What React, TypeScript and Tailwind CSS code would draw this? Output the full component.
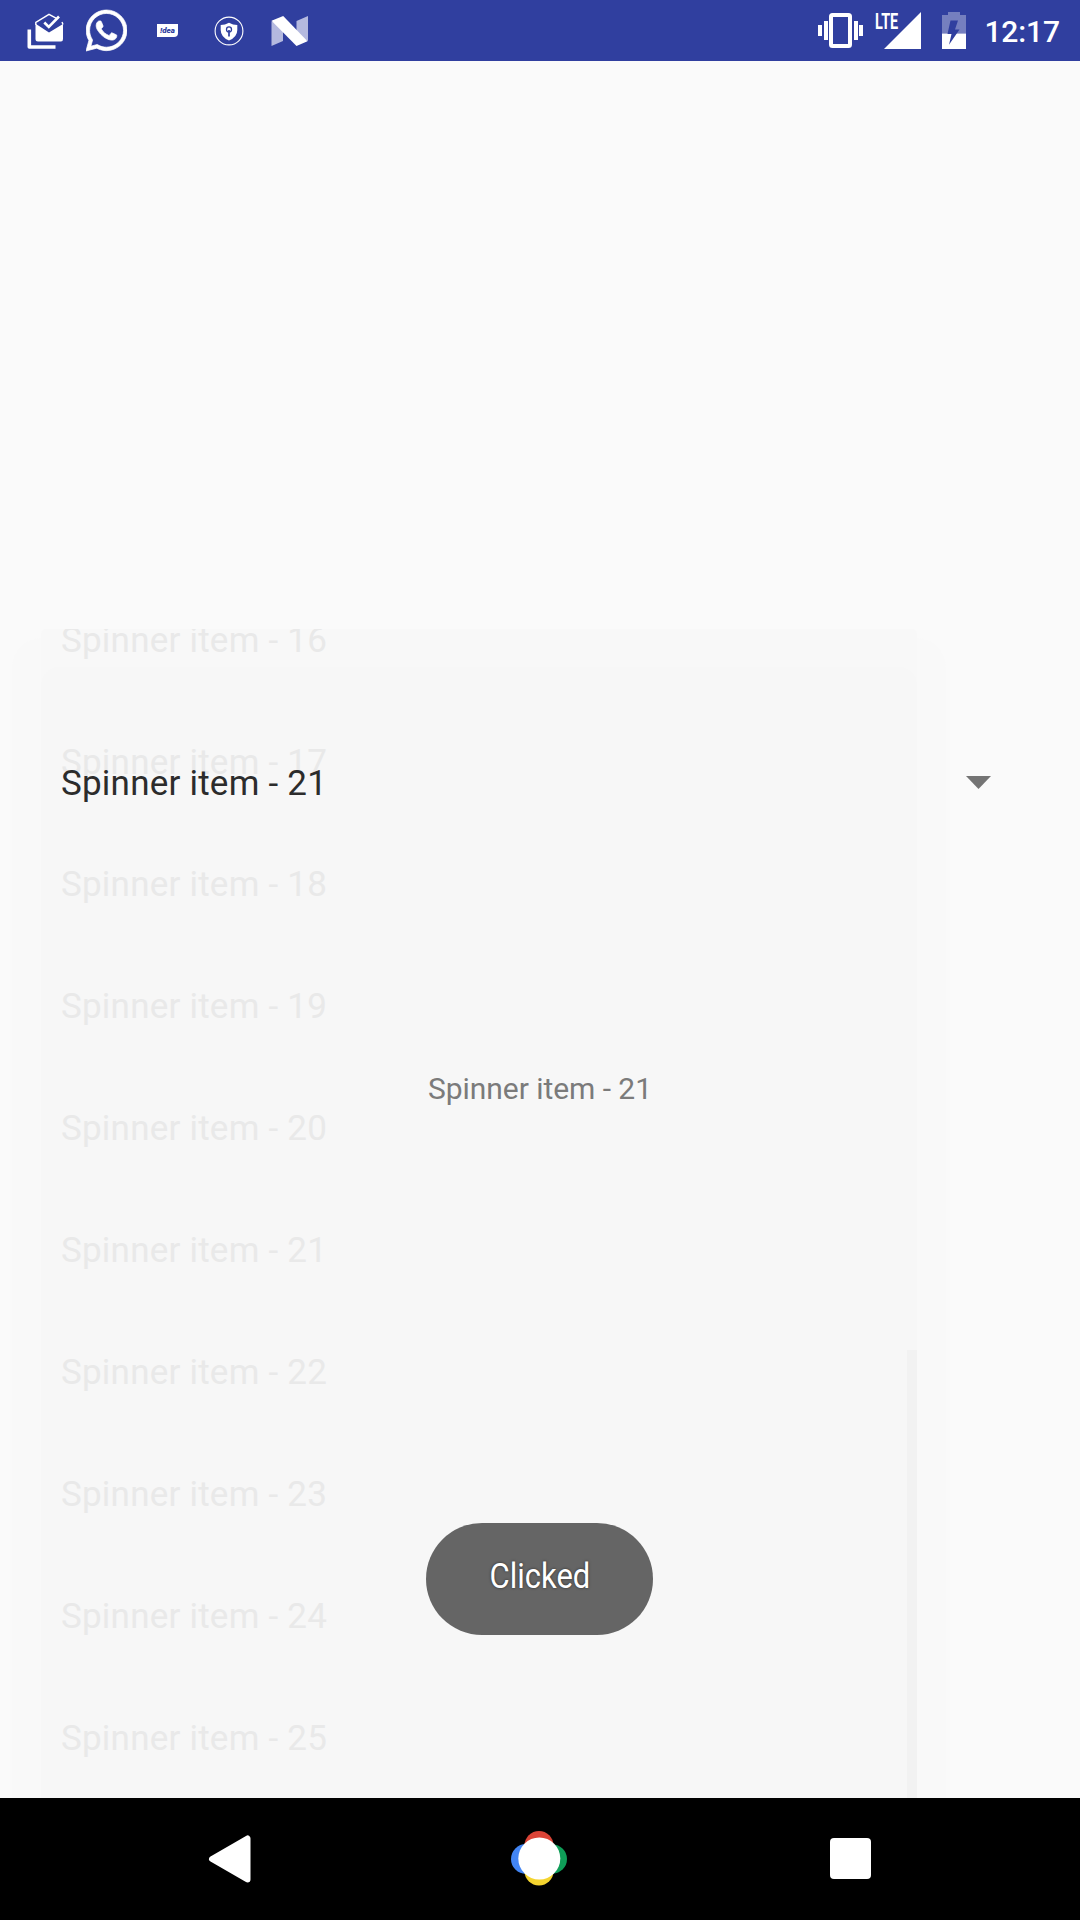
import { FaWhatsapp } from "react-icons/fa";

const items = [16, 17, 18, 19, 20, 21, 22, 23, 24, 25];

function InboxIcon() {
  return (
    <svg className="mt-[3px] h-[38px] w-[38px]" viewBox="0 0 38 38">
      <path d="M2.3 16.5V34H28.5" fill="none" stroke="#fff" strokeWidth="3.6" strokeLinejoin="round" />
      <path d="M9 11 22 19.5 36 11V26Q36 28.5 34 28.5H11Q8.5 28.5 8.5 26V12Z" fill="#fff" />
      <path d="M8.8 12V9.5L22 1.3 29 5.2M35 9 36 11.5" fill="none" stroke="#fff" strokeWidth="1.4" />
      <path d="M17.3 9.5 21.8 14 32 3.5" fill="none" stroke="#fff" strokeWidth="2.6" />
    </svg>
  );
}

function ShieldIcon() {
  return (
    <svg className="h-[30px] w-[30px]" viewBox="0 0 30 30">
      <circle cx="15" cy="15" r="13.9" fill="none" stroke="#fff" strokeWidth="1.1" />
      <path d="M15 6.8Q19 9 23.3 9V14Q23.3 21 15 24.5 6.7 21 6.7 14V9Q11 9 15 6.8Z" fill="#fff" />
      <circle cx="15" cy="13.4" r="2.5" fill="none" stroke="#303f9f" strokeWidth="1.3" />
      <path d="M15 14V20.5" stroke="#303f9f" strokeWidth="1.7" />
    </svg>
  );
}

function NougatIcon() {
  return (
    <svg className="h-[30px] w-[38px]" viewBox="0 0 38 30">
      <path d="M.5 5.2 12 9.5V25L.5 30ZM25.5 5 37 0V25L25.5 21Z" fill="#b4b9df" />
      <path d="M.5 4.8 12.2 0 36.5 25.2 25.5 30Z" fill="#fff" />
    </svg>
  );
}

function VibrateIcon() {
  return (
    <svg className="h-[36px] w-[46px]" viewBox="0 0 46 36">
      <path d="M0 12H4V23H0ZM6 8H10V27H6ZM36 8H40V27H36ZM41 12H45V23H41Z" fill="#fff" />
      <rect x="13" y="2" width="19" height="31" rx="1.5" fill="none" stroke="#fff" strokeWidth="4" />
    </svg>
  );
}

function BatteryIcon() {
  return (
    <svg className="h-[37px] w-[24px]" viewBox="0 0 24 37">
      <path d="M0 3H6V0H18V3H24V21.5H0Z" fill="#757fbf" />
      <path d="M0 21.5H24V37H0Z" fill="#fff" />
      <path d="M8.5 8.5H16L13 17.5H17.5L7 32.7 9.5 22H5.5Z" fill="#303f9f" />
    </svg>
  );
}

export default function App() {
  return (
    <div className="flex h-[1920px] w-[1080px] flex-col overflow-hidden bg-[#fafafa] font-[Roboto,sans-serif]">
      <header className="flex h-[61px] items-center justify-between bg-[#303f9f] pr-[20px] pl-[27px] text-white">
        <div className="flex items-center">
          <InboxIcon />
          <FaWhatsapp className="ml-[21px] h-[47px] w-[41px]" strokeWidth={8} />
          <div className="ml-[30px] flex h-[13px] w-[21px] items-center justify-center rounded-br-[4px] bg-white text-[8px] leading-none font-black text-[#303f9f] italic">
            !dea
          </div>
          <div className="ml-[36px]"><ShieldIcon /></div>
          <div className="ml-[27px]"><NougatIcon /></div>
        </div>
        <div className="flex items-center">
          <VibrateIcon />
          <div className="relative ml-[11px] h-[37px] w-[46px]">
            <svg className="h-full w-full" viewBox="0 0 46 37">
              <path d="M9 37H46V0Z" fill="#fff" />
            </svg>
            <span className="absolute top-[1px] left-0 origin-left scale-x-[0.67] text-[21.5px] leading-[18px] font-bold">LTE</span>
          </div>
          <div className="ml-[21px]"><BatteryIcon /></div>
          <span className="ml-[18px] pt-[2px] text-[30px] leading-[36px] font-medium tracking-[-0.1px]">12:17</span>
        </div>
      </header>

      <main className="relative flex h-[1737px] flex-col items-center overflow-hidden">
        <div className="absolute top-[577px] left-[12px] h-[1180px] w-[934px] rounded-t-[30px] bg-[#f9f9f9]" />
        <div className="absolute top-[568px] left-[41px] h-[1169px] w-[876px] overflow-hidden rounded-t-[5px] bg-[#f8f8f8]">
          <div className="absolute inset-x-0 top-[38px] bottom-0 rounded-t-[18px] bg-[#f7f7f7]" />
          <ul className="relative -mt-[49px] pl-[20px]">
            {items.map((n) => (
              <li key={n} className="h-[122px] text-[35px] leading-[122px] tracking-[0.22px] whitespace-nowrap text-[#e9e9e9]">
                Spinner item - {n}
              </li>
            ))}
          </ul>
          <div className="absolute right-0 bottom-0 h-[448px] w-[10px] bg-[#f2f2f2]" />
        </div>

        <div className="relative mt-[661px] flex h-[122px] w-full items-center justify-between pr-[89px] pl-[61px]">
          <span className="pt-[2px] text-[35px] leading-[40px] tracking-[0.22px] text-[#2c2c2c]">Spinner item - 21</span>
          <svg className="-mt-[2px] h-[13px] w-[25px]" viewBox="0 0 25 13">
            <path d="M0 0H25L12.5 13Z" fill="#747474" />
          </svg>
        </div>
        <p className="relative mt-[227px] text-[30px] leading-[36px] tracking-[-0.05px] text-[#7b7b7b]">Spinner item - 21</p>

        <div className="absolute top-[1462px] left-[426px] flex h-[112px] w-[227px] items-center justify-center rounded-full bg-[#656565]">
          <span className="scale-x-[0.885] pb-[5px] text-[35px] leading-[40px] text-white [text-shadow:0_0_3px_rgba(0,0,0,0.6)]">Clicked</span>
        </div>
      </main>

      <nav className="flex h-[122px] items-center bg-black">
        <svg className="ml-[208px] h-[50px] w-[44px]" viewBox="0 0 44 50">
          <path d="M4 25 39.5 4.5V45.5Z" fill="#fff" stroke="#fff" strokeWidth="6" strokeLinejoin="round" />
        </svg>
        <svg className="ml-[258px] h-[58px] w-[58px]" viewBox="0 0 58 58">
          <circle cx="29" cy="15.5" r="14.5" fill="#db4437" />
          <circle cx="16" cy="29" r="15" fill="#4285f4" />
          <circle cx="42.5" cy="29" r="14.5" fill="#0f9d58" />
          <circle cx="29" cy="41" r="14.5" fill="#f4d42f" />
          <circle cx="29.3" cy="28.5" r="21" fill="#fff" />
        </svg>
        <div className="-mt-px ml-[262px] h-[41px] w-[41px] rounded-[4px] bg-white" />
      </nav>
    </div>
  );
}
